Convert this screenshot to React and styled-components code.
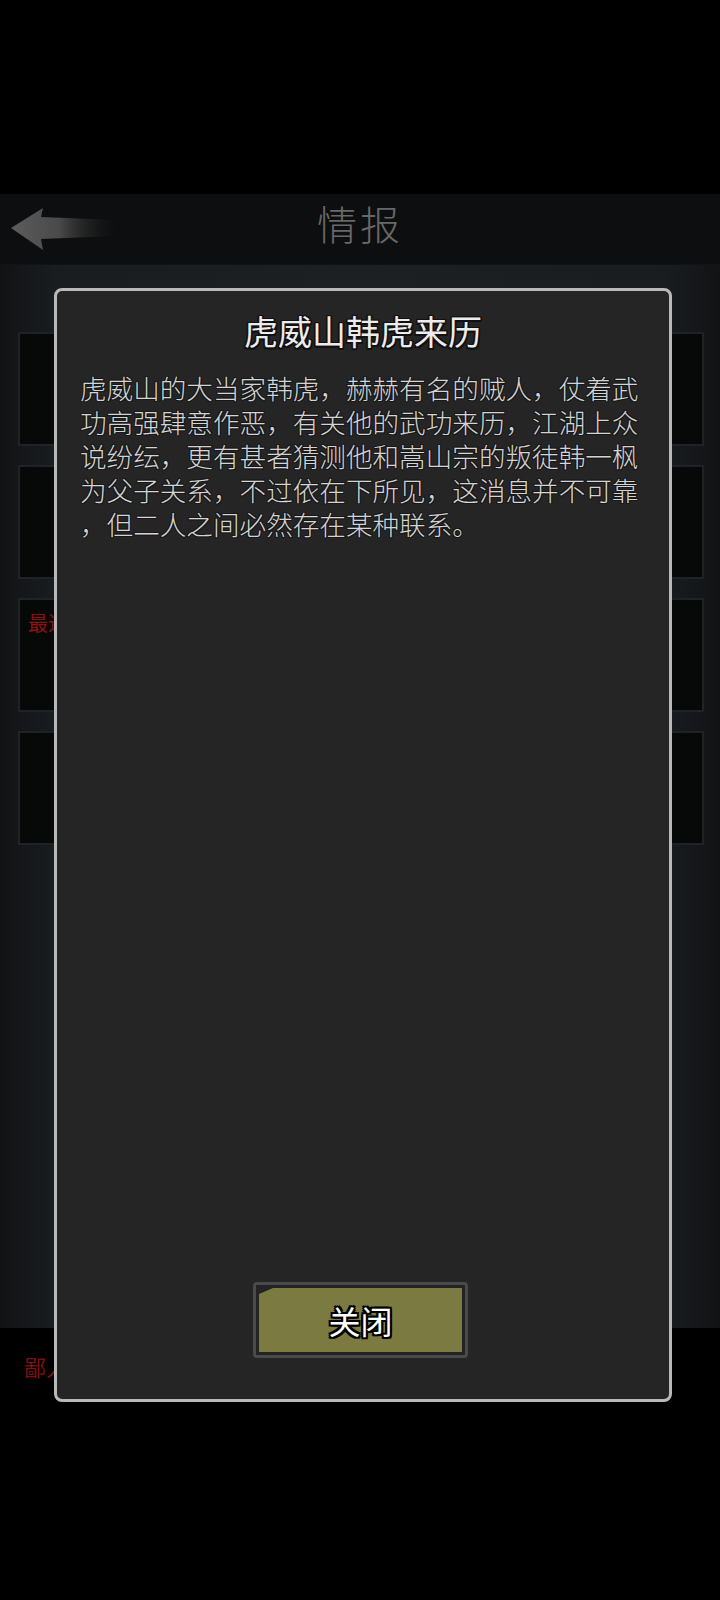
import React from 'react';
import styled, { createGlobalStyle } from 'styled-components';

const GlobalStyle = createGlobalStyle`
  html, body {
    margin: 0;
    padding: 0;
    background: #000;
  }
  body {
    font-family: "Noto Sans CJK SC", "Noto Sans", sans-serif;
  }
`;

const outline = (w, c) => `
  ${w}px 0 0 ${c}, -${w}px 0 0 ${c}, 0 ${w}px 0 ${c}, 0 -${w}px 0 ${c},
  ${w}px ${w}px 0 ${c}, -${w}px ${w}px 0 ${c}, ${w}px -${w}px 0 ${c}, -${w}px -${w}px 0 ${c}
`;

const Screen = styled.div`
  position: relative;
  width: 720px;
  height: 1600px;
  overflow: hidden;
  display: flex;
  flex-direction: column;
  background: #000;
`;

const StatusArea = styled.div`
  height: 194px;
  background: #000;
`;

const Header = styled.header`
  height: 70px;
  background: #0d0e0f;
  display: grid;
  grid-template-columns: 130px 1fr 130px;
  align-items: center;
  border-bottom: 1px solid #121315;
`;

const BackButton = styled.div`
  display: flex;
  align-items: center;
  padding-left: 11px;
`;

const HeaderTitle = styled.h1`
  margin: 0;
  text-align: center;
  font-size: 40px;
  font-weight: 300;
  color: #686868;
  letter-spacing: 3px;
  line-height: 1;
  padding-bottom: 12px;
`;

const Body = styled.main`
  flex: 0 0 1063px;
  background: linear-gradient(90deg, #111315 0%, #1a1d20 8%, #1c2023 50%, #1a1d20 92%, #111315 100%);
  padding: 67px 16px 0 18px;
  box-sizing: border-box;
  display: flex;
  flex-direction: column;
  gap: 19px;
`;

const Card = styled.div`
  height: 114px;
  background: #070808;
  border: 2px solid #202326;
  box-sizing: border-box;
  padding: 8px 8px;
`;

const CardTag = styled.span`
  font-size: 20px;
  color: #8a1212;
`;

const Footer = styled.footer`
  flex: 1;
  background: #000;
  padding: 22px 0 0 24px;
`;

const FooterTag = styled.span`
  font-size: 22px;
  color: #7d1010;
`;

const Modal = styled.section`
  position: absolute;
  left: 54px;
  top: 288px;
  width: 618px;
  height: 1114px;
  box-sizing: border-box;
  border: 3px solid #b9b9b9;
  border-radius: 8px;
  background: #252525;
  display: flex;
  flex-direction: column;
  align-items: center;
  padding: 20px 23px 41px;
`;

const ModalTitle = styled.h2`
  margin: 0;
  font-size: 34px;
  font-weight: 400;
  line-height: 1.2;
  color: #ececec;
  text-shadow: ${outline(1.5, '#111')};
`;

const ModalText = styled.p`
  margin: 19px 0 0;
  width: 566px;
  font-size: 26.6px;
  line-height: 34px;
  font-weight: 300;
  color: #d4d4d4;
  line-break: anywhere;
  word-break: break-all;
  text-shadow: ${outline(1, '#191919')};
`;

const Spacer = styled.div`
  flex: 1;
`;

const ButtonFrame = styled.button`
  width: 215px;
  height: 76px;
  margin-right: 5px;
  box-sizing: border-box;
  border: 3px solid #4a4a4a;
  border-radius: 4px;
  background: #232323;
  padding: 3px;
  cursor: pointer;
  display: flex;
`;

const ButtonFace = styled.span`
  flex: 1;
  background: #7b7b41;
  clip-path: polygon(14px 0, 100% 0, 100% 100%, 0 100%, 0 6px);
  display: flex;
  align-items: center;
  justify-content: center;
  font-family: "Noto Sans CJK SC", sans-serif;
  font-size: 32px;
  font-weight: 400;
  color: #fff;
  text-shadow: ${outline(2, '#000')};
`;

const BackArrow = () => (
  <svg width="106" height="42" viewBox="0 0 106 42">
    <defs>
      <linearGradient id="arrowFade" x1="0" y1="0" x2="1" y2="0">
        <stop offset="0" stopColor="#5c5c5c" />
        <stop offset="0.45" stopColor="#4a4a4a" />
        <stop offset="1" stopColor="#1a1a1a" stopOpacity="0" />
      </linearGradient>
    </defs>
    <path d="M0 20 L32 0 L30 9 L106 12 L106 28 L30 31 L32 42 Z" fill="url(#arrowFade)" />
  </svg>
);

export default function App() {
  return (
    <>
      <GlobalStyle />
      <Screen>
        <StatusArea />
        <Header>
          <BackButton>
            <BackArrow />
          </BackButton>
          <HeaderTitle>情报</HeaderTitle>
          <div />
        </Header>
        <Body>
          <Card />
          <Card />
          <Card>
            <CardTag>最近</CardTag>
          </Card>
          <Card />
        </Body>
        <Footer>
          <FooterTag>鄙人</FooterTag>
        </Footer>

        <Modal>
          <ModalTitle>虎威山韩虎来历</ModalTitle>
          <ModalText>
            虎威山的大当家韩虎，赫赫有名的贼人，仗着武功高强肆意作恶，有关他的武功来历，江湖上众说纷纭，更有甚者猜测他和嵩山宗的叛徒韩一枫为父子关系，不过依在下所见，这消息并不可靠，但二人之间必然存在某种联系。
          </ModalText>
          <Spacer />
          <ButtonFrame>
            <ButtonFace>关闭</ButtonFace>
          </ButtonFrame>
        </Modal>
      </Screen>
    </>
  );
}
